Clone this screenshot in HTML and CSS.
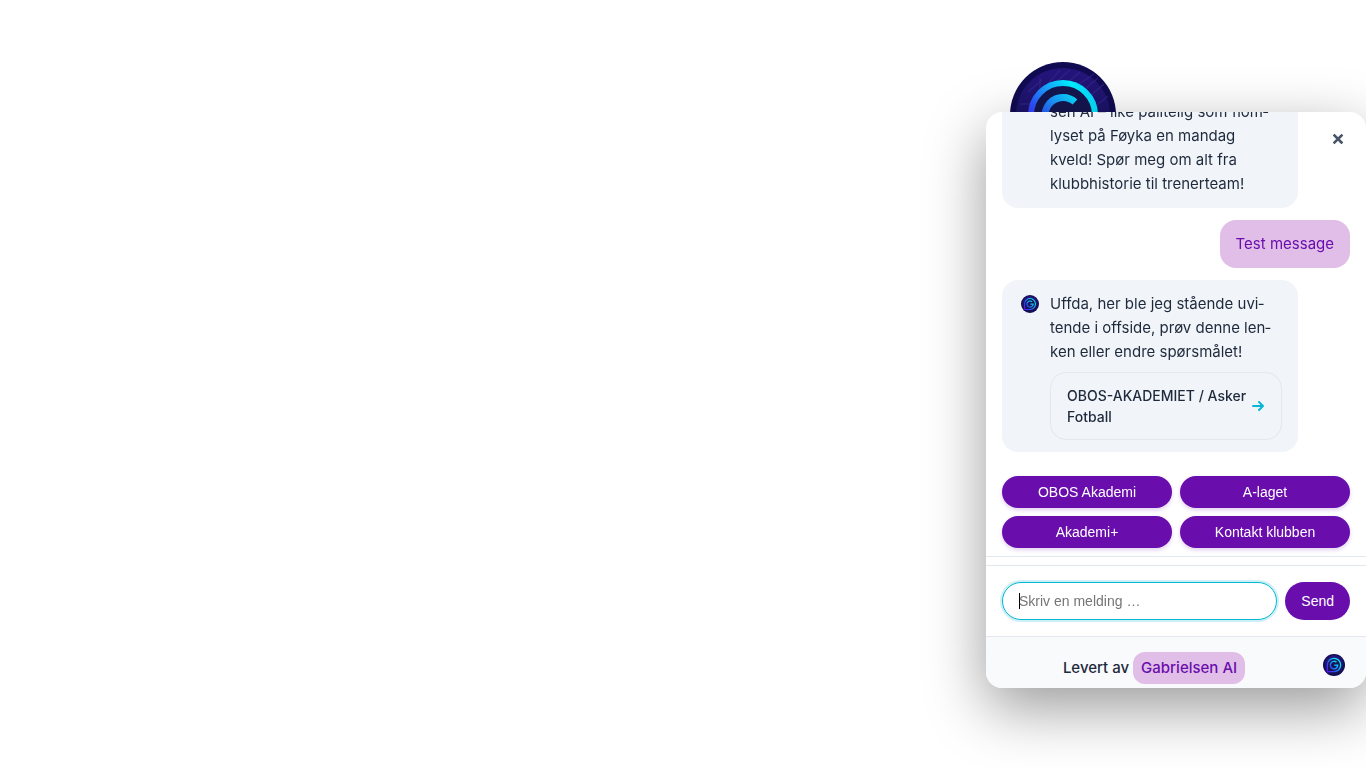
FILE: index.html
```html
<!DOCTYPE html>
<html lang="no">
<head>
<meta charset="utf-8">
<meta name="viewport" content="width=device-width, initial-scale=1">
<title>Gabrielsen AI</title>
<link rel="stylesheet" href="styles.css">
</head>
<body>
<svg class="defs" width="0" height="0" aria-hidden="true">
  <defs>
    <linearGradient id="ring" gradientUnits="userSpaceOnUse" x1="18" y1="76" x2="80" y2="26">
      <stop offset="0" stop-color="#5a14ff"/>
      <stop offset=".3" stop-color="#2c50ff"/>
      <stop offset=".55" stop-color="#1a9cff"/>
      <stop offset=".85" stop-color="#00f0ff"/>
      <stop offset="1" stop-color="#10d0ff"/>
    </linearGradient>
    <linearGradient id="disc" x1="0" y1="0" x2="0" y2="1">
      <stop offset="0" stop-color="#24157c"/>
      <stop offset="1" stop-color="#131252"/>
    </linearGradient>
    <symbol id="logo" viewBox="0 0 106 106">
      <circle cx="53" cy="53" r="53" fill="#110b52"/>
      <circle cx="53" cy="53" r="47" fill="url(#disc)"/>
      <path d="M10 42h10l10-14V16M18 30l14-12M34 26l16-18M60 8l-14 12M70 10l-14 12M66 24l18-12M74 28l14-12M80 34l14-12M86 44l12-10" fill="none" stroke="#3a2a94" stroke-width="1.5" opacity=".55"/>
      <path d="M21 86V53a32 32 0 1 1 32 32H34z" fill="#141650" stroke="url(#ring)" stroke-width="6" stroke-linejoin="round"/>
      <path d="M65 40a18 18 0 1 0 6 14H54" fill="none" stroke="url(#ring)" stroke-width="7"/>
    </symbol>
  </defs>
</svg>

<button class="launcher" aria-label="Åpne chat"><svg class="launcher-logo"><use href="#logo"/></svg></button>

<section class="chat" aria-label="Chat">
  <button class="close" aria-label="Lukk">
    <svg width="12" height="12" viewBox="0 0 12 12"><path d="M2.500 2.500l7 7M9.500 2.500l-7 7" stroke="#475569" stroke-width="2.500" stroke-linecap="square"/></svg>
  </button>
  <div class="messages">
    <article class="message bot">
      <div class="avatar"></div>
      <div class="body"><p>sen AI – like pålitelig som flom&shy;lyset på Føyka en mandag<br>kveld! Spør meg om alt fra klubbhistorie til trenerteam!</p></div>
    </article>
    <article class="message user"><p>Test message</p></article>
    <article class="message bot">
      <div class="avatar"><svg class="avatar-logo"><use href="#logo"/></svg></div>
      <div class="body">
        <p>Uffda, her ble jeg stående uvi&shy;tende i offside, prøv denne len&shy;ken eller endre spørsmålet!</p>
        <a class="card" href="#">
          <span>OBOS-AKADEMIET / Asker Fotball</span>
          <svg class="arrow" viewBox="0 0 14 14"><path d="M2 7h10M8 3l4 4-4 4" fill="none" stroke="#06b6d4" stroke-width="2" stroke-linecap="round" stroke-linejoin="round"/></svg>
        </a>
      </div>
    </article>
  </div>
  <nav class="chips">
    <button class="chip">OBOS Akademi</button>
    <button class="chip">A-laget</button>
    <button class="chip">Akademi+</button>
    <button class="chip">Kontakt klubben</button>
  </nav>
  <form class="composer">
    <input class="field" type="text" aria-label="Melding" placeholder="Skriv en melding …">
    <button class="send" type="submit">Send</button>
  </form>
  <footer class="footer">
    <p class="credit">Levert av <a class="brand" href="#">Gabrielsen AI</a></p>
    <svg class="footer-logo"><use href="#logo"/></svg>
  </footer>
</section>
</body>
</html>
```
FILE: styles.css
```css
* { box-sizing: border-box; }
body {
  margin: 0;
  min-height: 100vh;
  background: #fff;
  color: #1e293b;
  font: 15px/24px Inter, "Liberation Sans", sans-serif;
  overflow: hidden;
}
p { margin: 0; }
button { border: 0; cursor: pointer; font-family: "Liberation Sans", Arial, sans-serif; }
.defs { position: absolute; }
.launcher {
  position: fixed;
  right: 250px;
  bottom: 600px;
  padding: 0;
  border-radius: 50%;
  background: none;
}
.launcher-logo { display: block; width: 106px; height: 106px; }
.chat {
  position: fixed;
  right: 0;
  bottom: 80px;
  display: flex;
  flex-direction: column;
  width: 380px;
  max-width: 100vw;
  height: 75vh;
  border-radius: 16px;
  background: #fff;
  box-shadow: 0 20px 60px rgba(0, 0, 0, .4);
  overflow: hidden;
}
.close {
  position: absolute;
  top: 12px;
  right: 12px;
  display: grid;
  place-items: center;
  width: 32px;
  height: 30px;
  padding: 0;
  background: none;
}
.messages {
  flex: 1;
  min-height: 0;
  display: flex;
  flex-direction: column;
  justify-content: flex-end;
  gap: 12px;
  padding: 16px;
  overflow: hidden;
}
.message {
  flex: none;
  max-width: 85%;
  padding: 12px 16px;
  border-radius: 16px;
}
.bot { display: flex; gap: 8px; align-self: flex-start; background: #f1f5f9; }
.user { align-self: flex-end; background: #e1bee7; color: #6a0dad; }
.avatar { flex: none; display: grid; place-items: center; width: 24px; height: 24px; }
.avatar-logo { width: 18px; height: 18px; }
.body { flex: 1; min-width: 0; }
.card {
  display: flex;
  align-items: center;
  gap: 4px;
  margin-top: 8px;
  padding: 12px 16px;
  border: 1px solid #e2e8f0;
  border-radius: 16px;
  color: #1e293b;
  font-size: 14px;
  font-weight: 500;
  line-height: 21px;
  text-decoration: none;
}
.card span { flex: 1; }
.arrow { flex: none; width: 14px; height: 14px; }
.chips {
  display: grid;
  grid-template-columns: 1fr 1fr;
  gap: 8px;
  padding: 8px 16px;
  margin-bottom: 8px;
  border-bottom: 1px solid #e2e8f0;
}
.chip {
  height: 32px;
  border-radius: 16px;
  background: #6a0dad;
  color: #fff;
  font-size: 14px;
  box-shadow: 0 2px 4px rgba(106, 13, 173, .2);
}
.composer { display: flex; gap: 8px; padding: 16px; border-top: 1px solid #e2e8f0; }
.field {
  flex: 1;
  min-width: 0;
  height: 38px;
  padding: 0 16px;
  border: 1px solid #06b6d4;
  border-radius: 19px;
  outline: 0;
  background: linear-gradient(#000, #000) 16px 50% / 1px 16px no-repeat #fff;
  box-shadow: 0 0 0 2px rgba(6, 182, 212, .2);
  font: 14px "Liberation Sans", Arial, sans-serif;
}
.field::placeholder { color: #757575; }
.send {
  height: 38px;
  padding: 0 16px;
  border-radius: 19px;
  background: #6a0dad;
  color: #fff;
  font-size: 14px;
}
.footer {
  display: flex;
  gap: 12px;
  padding: 15px 16px 4px;
  border-top: 1px solid #e2e8f0;
  background: #f8fafc;
}
.credit { flex: 1; line-height: 32px; font-weight: 500; text-align: center; }
.brand {
  display: inline-block;
  padding: 0 8px;
  border-radius: 12px;
  background: #e1bee7;
  color: #6a0dad;
  text-decoration: none;
}
.footer-logo { width: 32px; height: 22px; margin-top: 2px; }
```
